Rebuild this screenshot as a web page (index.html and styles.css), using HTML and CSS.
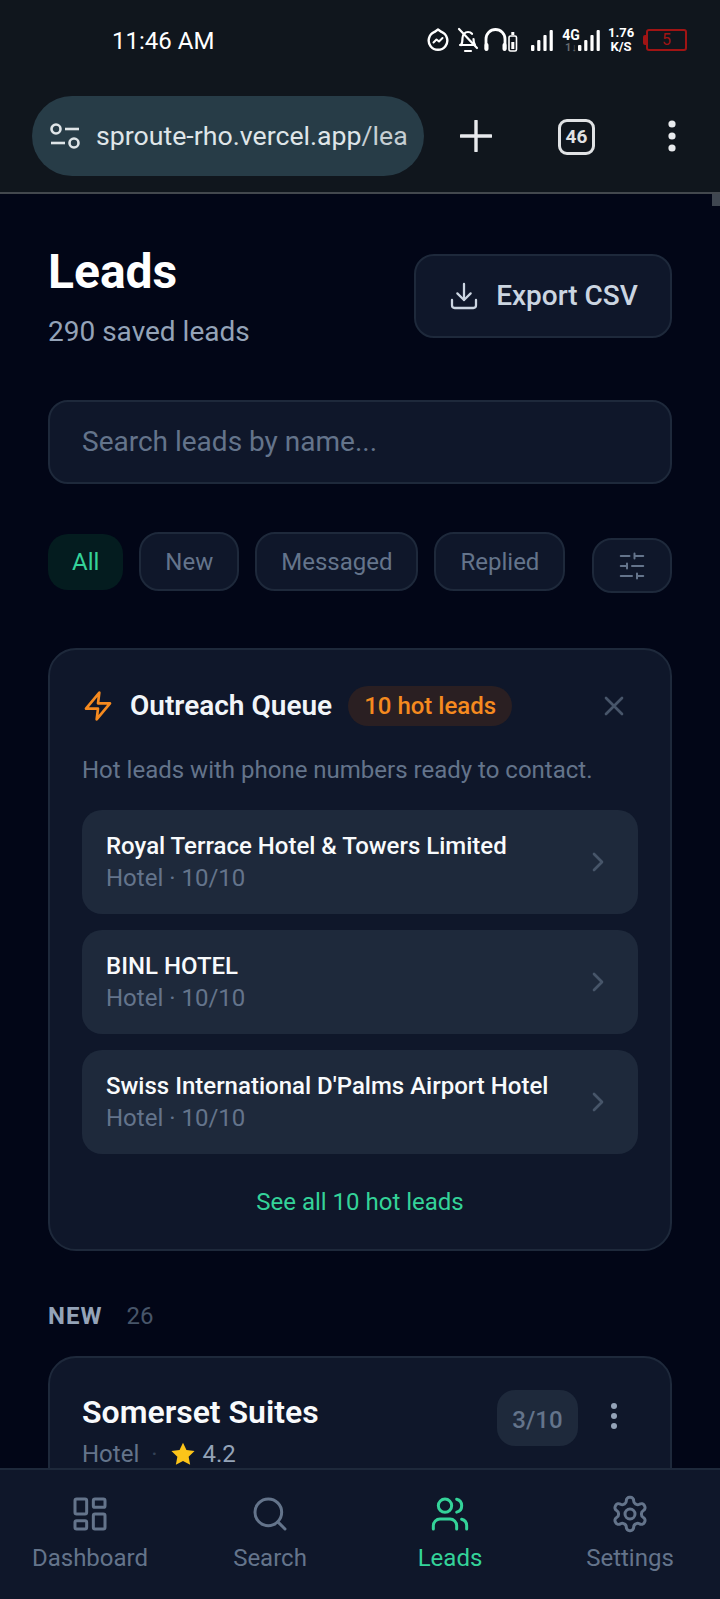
FILE: index.html
```html
<!DOCTYPE html>
<html lang="en">
<head>
    <meta charset="UTF-8">
    <meta name="viewport" content="width=device-width, initial-scale=1.0">
    <title>Leads</title>
    <link rel="stylesheet" href="styles.css">
</head>
<body>
    <div class="browser-bar">
        <div class="status-bar">
            <span class="clock">11:46 AM</span>
            <div class="status-icons">
                <svg class="st-icon" width="22" height="24" viewBox="0 0 22 24" fill="none" stroke="#fff" stroke-width="2.4" stroke-linecap="round" stroke-linejoin="round">
                    <path d="M11 1.500 L14.500 3.900 A9.300 9.300 0 1 1 7.500 3.900 Z"/>
                    <path d="M6.500 14.500l3-3 2.500 2 3.500-3.500" stroke-width="2"/>
                </svg>
                <svg class="st-icon bell" width="22" height="26" viewBox="0 0 22 26" fill="none" stroke="#fff" stroke-width="2.2" stroke-linecap="round" stroke-linejoin="round">
                    <path d="M4 18c1.500-2 1.500-4 1.500-7 0-3.500 2.500-6 5.500-6 1.500 0 3 .6 4 1.800"/>
                    <path d="M16.500 12c0 2.500.5 4.500 1.500 6H3"/>
                    <path d="M2 2l18 19"/>
                    <path d="M8 24h6"/>
                </svg>
                <svg class="st-icon phones" width="34" height="24" viewBox="0 0 34 24" fill="none" stroke="#fff" stroke-linecap="round">
                    <path d="M2 21V11a9.500 9.500 0 0 1 19 0v10" stroke-width="2.800"/>
                    <rect x="0.500" y="15" width="4" height="8" rx="2" fill="#fff" stroke="none"/>
                    <rect x="18.500" y="15" width="4" height="8" rx="2" fill="#fff" stroke="none"/>
                    <rect x="25" y="8" width="7.500" height="15" rx="1.500" stroke-width="1.600"/>
                    <rect x="27.300" y="4" width="3" height="3" fill="#fff" stroke="none"/>
                    <rect x="27.300" y="14" width="3" height="7" fill="#fff" stroke="none"/>
                </svg>
                <svg class="st-icon signal-a" width="22" height="24" viewBox="0 0 22 24" fill="#fff">
                    <rect x="0" y="17" width="3.400" height="6" rx="1"/>
                    <rect x="6.200" y="12" width="3.200" height="11" rx="1"/>
                    <rect x="12.400" y="7" width="3.200" height="16" rx="1"/>
                    <rect x="18.600" y="2" width="3.200" height="21" rx="1"/>
                </svg>
                <div class="net-type">
                    <span class="net-label">4G</span>
                    <span class="net-arrows">1↓</span>
                </div>
                <svg class="st-icon" width="22" height="24" viewBox="0 0 22 24" fill="#fff">
                    <rect x="0" y="17" width="3.400" height="6" rx="1"/>
                    <rect x="6.200" y="12" width="3.200" height="11" rx="1"/>
                    <rect x="12.400" y="7" width="3.200" height="16" rx="1"/>
                    <rect x="18.600" y="2" width="3.200" height="21" rx="1"/>
                </svg>
                <div class="net-speed">1.76<br>K/S</div>
                <div class="battery"><span class="battery-cap"></span><span class="battery-body">5</span></div>
            </div>
        </div>
        <div class="toolbar">
            <div class="url-pill">
                <svg width="30" height="26" viewBox="0 0 30 26" fill="none" stroke="#dfe5e8" stroke-width="2.600">
                    <circle cx="6" cy="6" r="4.500"/>
                    <path d="M15 6h14"/>
                    <circle cx="24" cy="20" r="4.500"/>
                    <path d="M1 20h14"/>
                </svg>
                <span class="url-text">sproute-rho.vercel.app<span class="url-path">/lea</span></span>
            </div>
            <svg class="plus" width="32" height="32" viewBox="0 0 32 32" stroke="#e8eaed" stroke-width="3.400" stroke-linecap="round">
                <path d="M16 1v30M1 16h30"/>
            </svg>
            <div class="tab-count">46</div>
            <svg class="more" width="10" height="34" viewBox="0 0 10 34" fill="#e8eaed">
                <circle cx="5" cy="5" r="3.600"/>
                <circle cx="5" cy="17" r="3.600"/>
                <circle cx="5" cy="29" r="3.600"/>
            </svg>
        </div>
    </div>

    <main class="page">
        <span class="scroll-thumb"></span>

        <div class="page-head">
            <div>
                <h1 class="page-title">Leads</h1>
                <p class="page-sub">290 saved leads</p>
            </div>
            <button class="export-btn">
                <svg width="32" height="32" viewBox="0 0 24 24" fill="none" stroke="currentColor" stroke-width="1.700" stroke-linecap="round" stroke-linejoin="round">
                    <path d="M21 15v4a2 2 0 0 1-2 2H5a2 2 0 0 1-2-2v-4"/>
                    <polyline points="7 10 12 15 17 10"/>
                    <line x1="12" y1="15" x2="12" y2="3"/>
                </svg>
                <span class="export-label">Export CSV</span>
            </button>
        </div>

        <div class="search-box">Search leads by name...</div>

        <div class="filters">
            <span class="chip chip-active">All</span>
            <span class="chip">New</span>
            <span class="chip">Messaged</span>
            <span class="chip">Replied</span>
            <button class="filter-btn">
                <svg width="30" height="30" viewBox="0 0 24 24" fill="none" stroke="currentColor" stroke-width="1.600" stroke-linecap="round">
                    <path d="M21 4h-7M10 4H3M21 12h-9M8 12H3M21 20h-5M12 20H3M14 2v4M8 10v4M16 18v4"/>
                </svg>
            </button>
        </div>

        <section class="queue-card">
            <div class="queue-head">
                <svg class="bolt" width="32" height="32" viewBox="0 0 24 24" fill="none" stroke="currentColor" stroke-width="2" stroke-linecap="round" stroke-linejoin="round">
                    <polygon points="13 2 3 14 12 14 11 22 21 10 12 10 13 2"/>
                </svg>
                <span class="queue-title">Outreach Queue</span>
                <span class="hot-badge">10 hot leads</span>
                <svg class="close" width="32" height="32" viewBox="0 0 24 24" fill="none" stroke="currentColor" stroke-width="2" stroke-linecap="round">
                    <path d="M18 6L6 18M6 6l12 12"/>
                </svg>
            </div>
            <p class="queue-desc">Hot leads with phone numbers ready to contact.</p>

            <div class="queue-list">
                <div class="queue-row">
                    <div>
                        <div class="row-name">Royal Terrace Hotel &amp; Towers Limited</div>
                        <div class="row-meta">Hotel · 10/10</div>
                    </div>
                    <svg class="row-arrow" width="32" height="32" viewBox="0 0 24 24" fill="none" stroke="currentColor" stroke-width="2" stroke-linecap="round" stroke-linejoin="round"><path d="M9 18l6-6-6-6"/></svg>
                </div>
                <div class="queue-row">
                    <div>
                        <div class="row-name">BINL HOTEL</div>
                        <div class="row-meta">Hotel · 10/10</div>
                    </div>
                    <svg class="row-arrow" width="32" height="32" viewBox="0 0 24 24" fill="none" stroke="currentColor" stroke-width="2" stroke-linecap="round" stroke-linejoin="round"><path d="M9 18l6-6-6-6"/></svg>
                </div>
                <div class="queue-row">
                    <div>
                        <div class="row-name">Swiss International D'Palms Airport Hotel</div>
                        <div class="row-meta">Hotel · 10/10</div>
                    </div>
                    <svg class="row-arrow" width="32" height="32" viewBox="0 0 24 24" fill="none" stroke="currentColor" stroke-width="2" stroke-linecap="round" stroke-linejoin="round"><path d="M9 18l6-6-6-6"/></svg>
                </div>
            </div>

            <div class="see-all">See all 10 hot leads</div>
        </section>

        <div class="group-head">
            <span class="group-name">NEW</span>
            <span class="group-count">26</span>
        </div>

        <section class="lead-card">
            <div>
                <div class="lead-name">Somerset Suites</div>
                <div class="lead-meta">
                    <span>Hotel</span>
                    <span class="meta-dot">·</span>
                    <svg width="26" height="26" viewBox="0 0 24 24" fill="#fcc419"><path d="M12 1.500l3.200 6.900 7.500.9-5.500 5.200 1.400 7.500L12 18.400l-6.600 3.600 1.400-7.500L1.300 9.300l7.500-.9z"/></svg>
                    <span class="lead-rating">4.2</span>
                </div>
            </div>
            <div class="lead-side">
                <span class="score-badge">3/10</span>
                <svg class="lead-more" width="10" height="28" viewBox="0 0 10 28" fill="currentColor">
                    <circle cx="5" cy="4" r="3"/>
                    <circle cx="5" cy="14" r="3"/>
                    <circle cx="5" cy="24" r="3"/>
                </svg>
            </div>
        </section>
    </main>

    <nav class="bottom-nav">
        <div class="nav-item">
            <svg width="40" height="40" viewBox="0 0 24 24" fill="none" stroke="currentColor" stroke-width="1.800" stroke-linecap="round" stroke-linejoin="round">
                <rect x="3" y="3" width="7" height="9" rx="1"/>
                <rect x="14" y="3" width="7" height="5" rx="1"/>
                <rect x="14" y="12" width="7" height="9" rx="1"/>
                <rect x="3" y="16" width="7" height="5" rx="1"/>
            </svg>
            <span>Dashboard</span>
        </div>
        <div class="nav-item">
            <svg width="40" height="40" viewBox="0 0 24 24" fill="none" stroke="currentColor" stroke-width="1.800" stroke-linecap="round" stroke-linejoin="round">
                <circle cx="11" cy="11" r="8"/>
                <path d="M21 21l-4.300-4.300"/>
            </svg>
            <span>Search</span>
        </div>
        <div class="nav-item nav-active">
            <svg width="40" height="40" viewBox="0 0 24 24" fill="none" stroke="currentColor" stroke-width="1.800" stroke-linecap="round" stroke-linejoin="round">
                <path d="M16 21v-2a4 4 0 0 0-4-4H6a4 4 0 0 0-4 4v2"/>
                <circle cx="9" cy="7" r="4"/>
                <path d="M22 21v-2a4 4 0 0 0-3-3.870"/>
                <path d="M16 3.130a4 4 0 0 1 0 7.750"/>
            </svg>
            <span>Leads</span>
        </div>
        <div class="nav-item">
            <svg width="40" height="40" viewBox="0 0 24 24" fill="none" stroke="currentColor" stroke-width="1.800" stroke-linecap="round" stroke-linejoin="round">
                <path d="M12.220 2h-.44a2 2 0 0 0-2 2v.18a2 2 0 0 1-1 1.730l-.43.25a2 2 0 0 1-2 0l-.15-.08a2 2 0 0 0-2.730.73l-.22.38a2 2 0 0 0 .73 2.730l.15.1a2 2 0 0 1 1 1.720v.51a2 2 0 0 1-1 1.740l-.15.09a2 2 0 0 0-.73 2.730l.22.38a2 2 0 0 0 2.730.73l.15-.08a2 2 0 0 1 2 0l.43.25a2 2 0 0 1 1 1.730V20a2 2 0 0 0 2 2h.44a2 2 0 0 0 2-2v-.18a2 2 0 0 1 1-1.730l.43-.25a2 2 0 0 1 2 0l.15.08a2 2 0 0 0 2.730-.73l.22-.39a2 2 0 0 0-.73-2.730l-.15-.08a2 2 0 0 1-1-1.740v-.5a2 2 0 0 1 1-1.740l.15-.09a2 2 0 0 0 .73-2.730l-.22-.38a2 2 0 0 0-2.730-.73l-.15.08a2 2 0 0 1-2 0l-.43-.25a2 2 0 0 1-1-1.730V4a2 2 0 0 0-2-2z"/>
                <circle cx="12" cy="12" r="3"/>
            </svg>
            <span>Settings</span>
        </div>
    </nav>
</body>
</html>
```

FILE: styles.css
```css
* {
    margin: 0;
    padding: 0;
    box-sizing: border-box;
    font-family: 'Roboto', sans-serif;
}

body {
    width: 720px;
    height: 1599px;
    overflow: hidden;
    background-color: #020617;
    display: flex;
    flex-direction: column;
}

/* Phone status bar + browser toolbar */
.browser-bar {
    height: 194px;
    flex-shrink: 0;
    background: #10161d;
    border-bottom: 2px solid #43484e;
}

.status-bar {
    height: 80px;
    display: flex;
    align-items: center;
    padding-left: 112px;
}

.clock {
    color: #fff;
    font-size: 24px;
    padding-top: 2px;
}

.status-icons {
    margin-left: auto;
    margin-right: 33px;
    display: flex;
    align-items: center;
}

.st-icon {
    display: block;
    flex-shrink: 0;
}

.bell {
    margin-left: 8px;
}

.phones {
    margin-left: 5px;
}

.signal-a {
    margin-left: 13px;
}

.net-type {
    margin-left: 9px;
    margin-right: -2px;
    width: 18px;
    display: flex;
    flex-direction: column;
    align-items: center;
    color: #fff;
    line-height: 1;
}

.net-label {
    font-size: 14px;
    font-weight: 700;
}

.net-arrows {
    font-size: 11px;
    color: #666b70;
    font-weight: 700;
}

.net-speed {
    margin-left: 8px;
    width: 26px;
    text-align: center;
    color: #fff;
    font-size: 13px;
    font-weight: 700;
    line-height: 14px;
}

.battery {
    margin-left: 9px;
    display: flex;
    align-items: center;
}

.battery-cap {
    width: 3px;
    height: 10px;
    background: #a01414;
    border-radius: 2px 0 0 2px;
}

.battery-body {
    width: 41px;
    height: 22px;
    border: 2px solid #a01414;
    border-radius: 3px;
    color: #a01414;
    font-size: 16px;
    line-height: 18px;
    text-align: center;
}

.toolbar {
    height: 80px;
    margin-top: 16px;
    display: flex;
    align-items: center;
    padding-left: 32px;
}

.url-pill {
    width: 392px;
    height: 80px;
    border-radius: 40px;
    background: #273c47;
    display: flex;
    align-items: center;
    padding-left: 18px;
    gap: 16px;
}

.url-text {
    color: #dfe5e8;
    font-size: 26.7px;
    white-space: nowrap;
    overflow: hidden;
}

.url-path {
    color: #c5ced3;
}

.plus {
    margin-left: 36px;
}

.tab-count {
    margin-left: 66px;
    margin-top: 2px;
    width: 37px;
    height: 36px;
    border: 3.5px solid #e0e2e4;
    border-radius: 9px;
    color: #e0e2e4;
    font-size: 19px;
    font-weight: 700;
    line-height: 29px;
    text-align: center;
}

.more {
    margin-left: 72px;
}

/* Page */
.page {
    flex: 1;
    min-height: 0;
    overflow: hidden;
    position: relative;
    padding: 48px 48px 0;
}

.scroll-thumb {
    position: absolute;
    top: 0;
    right: 0;
    width: 8px;
    height: 12px;
    background: #3f4650;
}

.page-head {
    display: flex;
    justify-content: space-between;
    align-items: flex-start;
}

.page-title {
    color: #fff;
    font-size: 48px;
    font-weight: 700;
    line-height: 60px;
}

.page-sub {
    margin-top: 10px;
    color: #94a3b8;
    font-size: 28px;
    line-height: 40px;
}

.export-btn {
    margin-top: 12px;
    width: 258px;
    height: 84px;
    background: #0f172a;
    border: 2px solid #1e293b;
    border-radius: 20px;
    color: #cbd5e1;
    font-size: 28px;
    font-weight: 500;
    display: flex;
    align-items: center;
    justify-content: center;
    gap: 16px;
}

.export-label {
    padding-bottom: 2px;
}

.search-box {
    margin-top: 48px;
    height: 84px;
    background: #0f172a;
    border: 2px solid #1e293b;
    border-radius: 20px;
    color: #64748b;
    font-size: 28px;
    line-height: 80px;
    padding-left: 32px;
}

.filters {
    margin-top: 48px;
    height: 61px;
    display: flex;
    align-items: flex-start;
    gap: 16px;
}

.chip {
    height: 59px;
    padding: 0 24px;
    background: #0f172a;
    border: 2px solid #1e293b;
    border-radius: 20px;
    color: #64748b;
    font-size: 24px;
    line-height: 57px;
}

.chip-active {
    height: 56px;
    margin-top: 2px;
    padding: 0 24px;
    background: #041c1f;
    border: none;
    color: #34d399;
    line-height: 56px;
}

.filter-btn {
    flex-shrink: 0;
    margin-top: 6px;
    margin-left: auto;
    width: 80px;
    height: 55px;
    background: #0f172a;
    border: 2px solid #1e293b;
    border-radius: 20px;
    color: #64748b;
    display: flex;
    align-items: center;
    justify-content: center;
}

.queue-card {
    margin-top: 55px;
    background: #0f172a;
    border: 2px solid #1e293b;
    border-radius: 28px;
    padding: 31px 32px 29px;
}

.queue-head {
    height: 50px;
    display: flex;
    align-items: center;
}

.bolt {
    color: #f58a1f;
}

.queue-title {
    margin-left: 16px;
    padding-bottom: 2px;
    color: #f1f5f9;
    font-size: 28px;
    font-weight: 600;
}

.hot-badge {
    margin-left: 16px;
    height: 40px;
    padding: 0 16px;
    border-radius: 20px;
    background: #2a1f22;
    color: #f58a1f;
    font-size: 24px;
    font-weight: 500;
    line-height: 40px;
}

.close {
    margin-left: auto;
    margin-right: 8px;
    color: #475569;
}

.queue-desc {
    margin-top: 21px;
    color: #64748b;
    font-size: 24px;
    line-height: 36px;
}

.queue-list {
    margin-top: 22px;
    display: flex;
    flex-direction: column;
    gap: 16px;
}

.queue-row {
    height: 104px;
    background: #1e293b;
    border-radius: 20px;
    padding: 0 24px 2px;
    display: flex;
    align-items: center;
    justify-content: space-between;
    color: #475569;
}

.row-arrow {
    margin-top: 2px;
}

.row-name {
    color: #f8fafc;
    font-size: 24px;
    font-weight: 500;
    line-height: 34px;
}

.row-meta {
    color: #64748b;
    font-size: 24px;
    line-height: 30px;
}

.see-all {
    margin-top: 30px;
    color: #34d399;
    font-size: 24px;
    line-height: 36px;
    text-align: center;
}

.group-head {
    margin-top: 49px;
    display: flex;
    gap: 24px;
    line-height: 32px;
    font-size: 24px;
}

.group-name {
    color: #94a3b8;
    font-weight: 700;
    letter-spacing: 1px;
}

.group-count {
    color: #475569;
}

.lead-card {
    margin-top: 24px;
    height: 200px;
    background: #0f172a;
    border: 2px solid #1e293b;
    border-radius: 28px;
    padding: 31px 32px;
    display: flex;
    justify-content: space-between;
    align-items: flex-start;
}

.lead-name {
    color: #f8fafc;
    font-size: 32px;
    font-weight: 600;
    line-height: 46px;
}

.lead-meta {
    margin-top: 4px;
    display: flex;
    align-items: center;
    gap: 7px;
    color: #64748b;
    font-size: 24px;
    line-height: 30px;
}

.meta-dot {
    color: #334155;
    margin: 0 5px;
}

.lead-rating {
    color: #94a3b8;
}

.lead-side {
    display: flex;
    align-items: flex-start;
    gap: 31px;
    color: #94a3b8;
    padding-right: 19px;
}

.score-badge {
    margin-top: 1px;
    width: 81px;
    height: 56px;
    border-radius: 18px;
    background: #1e293b;
    color: #64748b;
    font-size: 24px;
    font-weight: 500;
    line-height: 60px;
    text-align: center;
}

.lead-more {
    margin-top: 13px;
}

/* Bottom tab bar */
.bottom-nav {
    height: 131px;
    flex-shrink: 0;
    background: #0f172a;
    border-top: 2px solid #1e293b;
    display: grid;
    grid-template-columns: repeat(4, 1fr);
    padding-top: 24px;
}

.nav-item {
    display: flex;
    flex-direction: column;
    align-items: center;
    gap: 7px;
    color: #64748b;
    font-size: 24px;
    line-height: 34px;
}

.nav-active {
    color: #34d399;
}
```
